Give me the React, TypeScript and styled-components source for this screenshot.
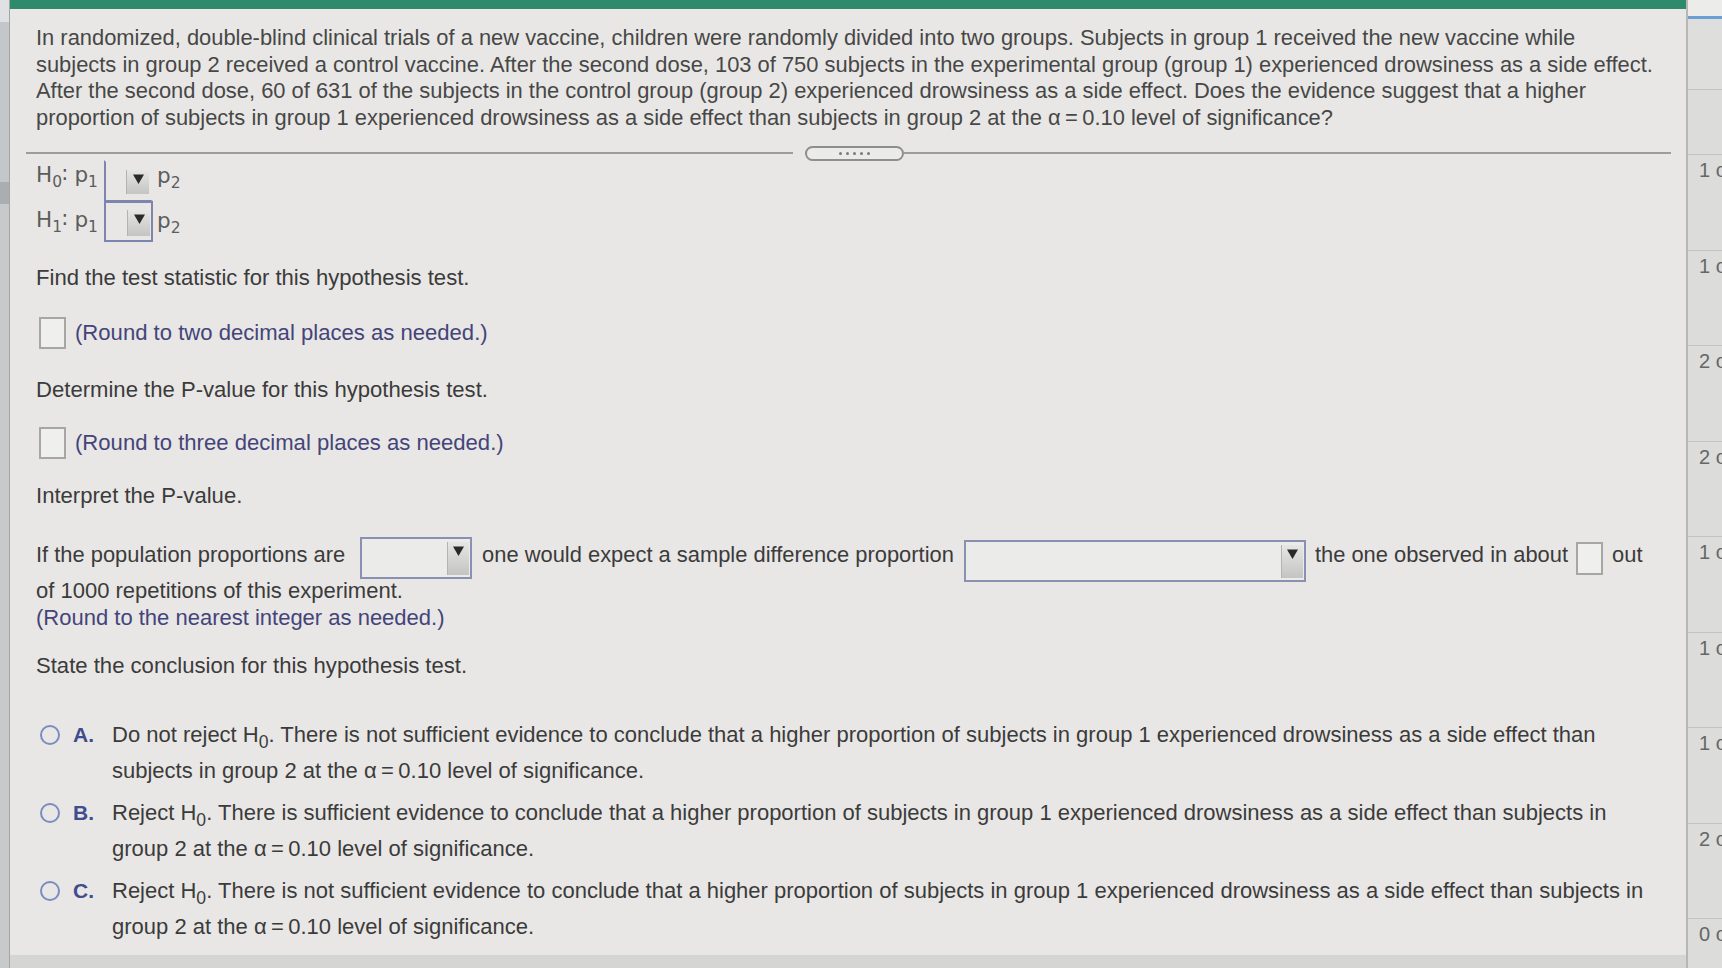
import React from "react";
import styled, { createGlobalStyle } from "styled-components";

const GlobalStyle = createGlobalStyle`
  html, body { margin: 0; padding: 0; }
  body {
    background: #dcdcda;
    font-family: "Liberation Sans", Arial, sans-serif;
  }
  #root { width: 1722px; height: 968px; overflow: hidden; }
`;

const Page = styled.div`
  display: flex;
  width: 1722px;
  height: 968px;
  overflow: hidden;
`;

const LeftRail = styled.div`
  flex: none;
  width: 9px;
  border-right: 1px solid #a3a5a7;
  background: linear-gradient(
    #dfe1e3 0, #dfe1e3 22px,
    #c4c7ca 22px, #c4c7ca 182px,
    #abaeb1 182px, #abaeb1 204px,
    #c7c9cb 204px
  );
`;

const Main = styled.div`
  flex: 1;
  display: flex;
  flex-direction: column;
  background: #e8e7e5;
  border-right: 2px solid #b7b7b5;
  min-width: 0;
`;

const TopBar = styled.div`
  flex: none;
  height: 9px;
  background: #2e8a6c;
`;

const Content = styled.div`
  flex: 1;
  padding: 16px 0 0 26px;
  color: #3b3b3b;
`;

const Intro = styled.p`
  margin: 0;
  font-size: 21.9px;
  line-height: 26.5px;
  color: #474747;
  white-space: nowrap;
`;

const Divider = styled.div`
  display: flex;
  align-items: center;
  height: 14px;
  margin: 15px 15px 0 -10px;
`;

const DividerLine = styled.div`
  flex: 1;
  height: 2px;
  background: #9c9c9a;
`;

const Handle = styled.div`
  flex: none;
  width: 99px;
  height: 15px;
  box-sizing: border-box;
  border: 2px solid #8e8e8c;
  border-radius: 8px;
  background: #ebebea;
  display: flex;
  align-items: center;
  justify-content: center;
  gap: 4px;
  margin-left: 12px;
`;

const Dot = styled.span`
  width: 3px;
  height: 3px;
  border-radius: 50%;
  background: #7a7a7a;
`;

const HypRow = styled.div`
  display: flex;
  align-items: flex-start;
  height: 41px;
`;

const HypLabel = styled.span<{ $dy: number }>`
  width: 68px;
  margin-top: ${(p) => p.$dy}px;
  font-family: "DejaVu Sans", "Liberation Sans", sans-serif;
  font-size: 21.5px;
  line-height: 26px;
  color: #5c5c5c;
  white-space: nowrap;
`;

const Sub = styled.sub`
  font-size: 0.72em;
  line-height: 0;
  vertical-align: -0.3em;
`;

const HypSelect = styled.div<{ $first?: boolean }>`
  width: 49px;
  height: 41px;
  box-sizing: border-box;
  border: 2px solid #7d84ad;
  border-top-color: ${(p) => (p.$first ? "transparent" : "#7d84ad")};
  border-right-color: ${(p) => (p.$first ? "transparent" : "#7d84ad")};
  border-bottom-width: ${(p) => (p.$first ? "1px" : "2px")};
  display: flex;
  justify-content: flex-end;
  align-items: flex-start;
  padding: ${(p) => (p.$first ? "8px 2px 0 0" : "7px 1px 0 0")};
`;

const ArrowBtn = styled.span<{ $w: number; $h: number }>`
  width: ${(p) => p.$w}px;
  height: ${(p) => p.$h}px;
  box-sizing: border-box;
  background: linear-gradient(#e6e6e4, #c4c4c2);
  border-left: 1px solid #b3b3b1;
  display: flex;
  justify-content: center;
  align-items: flex-start;
  padding-top: 4px;
`;

const HypAfter = styled.span<{ $dy: number }>`
  margin: ${(p) => p.$dy}px 0 0 4px;
  font-family: "DejaVu Sans", "Liberation Sans", sans-serif;
  font-size: 21.5px;
  line-height: 26px;
  color: #5c5c5c;
`;

const Prompt = styled.div<{ $mt: number }>`
  margin-top: ${(p) => p.$mt}px;
  font-size: 22.1px;
  line-height: 26px;
  white-space: nowrap;
`;

const AnswerRow = styled.div<{ $mt: number }>`
  display: flex;
  align-items: center;
  height: 34px;
  margin-top: ${(p) => p.$mt}px;
  padding-left: 3px;
  gap: 9px;
`;

const InputBox = styled.span<{ $mt?: number; $ml?: number; $h?: number }>`
  flex: none;
  width: 27px;
  height: ${(p) => p.$h ?? 32}px;
  box-sizing: border-box;
  border: 2px solid #a6a6a4;
  background: #efefee;
  margin-top: ${(p) => p.$mt ?? 0}px;
  margin-left: ${(p) => p.$ml ?? 0}px;
`;

const Hint = styled.span`
  font-size: 22.1px;
  line-height: 26px;
  color: #44447a;
  white-space: nowrap;
`;

const InterpretRow = styled.div`
  display: flex;
  align-items: flex-start;
  height: 40px;
  margin-top: 28px;
  white-space: nowrap;
`;

const RowText = styled.span<{ $ml?: number }>`
  margin-top: 5px;
  margin-left: ${(p) => p.$ml ?? 0}px;
  font-size: 21.9px;
  line-height: 26px;
`;

const Select = styled.span<{ $w: number; $mt: number; $ml: number }>`
  flex: none;
  width: ${(p) => p.$w}px;
  height: 42px;
  box-sizing: border-box;
  margin-top: ${(p) => p.$mt}px;
  margin-left: ${(p) => p.$ml}px;
  border: 2px solid #8a90b0;
  background: #ebebea;
  display: flex;
  justify-content: flex-end;
  align-items: flex-start;
  padding: 3px 1px 0 0;
`;

const LineText = styled.div<{ $hint?: boolean }>`
  font-size: 22px;
  line-height: 27px;
  color: ${(p) => (p.$hint ? "#44447a" : "#3b3b3b")};
  white-space: nowrap;
`;

const Options = styled.div`
  margin-top: 38px;
  display: flex;
  flex-direction: column;
  gap: 6px;
`;

const Option = styled.div`
  display: flex;
  align-items: flex-start;
`;

const Radio = styled.span`
  flex: none;
  width: 20px;
  height: 20px;
  box-sizing: border-box;
  border: 2px solid #7a8cc0;
  border-radius: 50%;
  margin: 8px 13px 0 4px;
`;

const Letter = styled.span`
  flex: none;
  width: 39px;
  font-size: 21px;
  line-height: 36px;
  font-weight: bold;
  color: #3f4c8e;
`;

const OptionText = styled.div`
  font-size: 22px;
  line-height: 36px;
  white-space: nowrap;
`;

const OptSub = styled.sub`
  font-size: 0.8em;
  line-height: 0;
  vertical-align: -0.35em;
`;

const Footer = styled.div`
  flex: none;
  height: 13px;
  background: #d5d5d3;
`;

const RightRail = styled.div`
  flex: none;
  width: 34px;
  display: flex;
  flex-direction: column;
  background: #dcdcda;
  overflow: hidden;
`;

const RailBand = styled.div<{ $h: number; $bg: string; $line?: boolean }>`
  flex: none;
  height: ${(p) => p.$h}px;
  background: ${(p) => p.$bg};
  box-sizing: border-box;
  border-bottom: ${(p) => (p.$line ? "1px solid #c3c3c1" : "none")};
`;

const RailRow = styled.div`
  flex: none;
  height: 95.5px;
  box-sizing: border-box;
  border-bottom: 1px solid #c3c3c1;
  padding: 3px 0 0 11px;
  font-size: 20px;
  line-height: 24px;
  color: #666;
  white-space: nowrap;
`;

const Tri = () => (
  <svg width="11" height="10" viewBox="0 0 11 10">
    <path d="M0 0.5 L11 0.5 L5.5 10 Z" fill="#2a2a2a" />
  </svg>
);

const alpha = "\u03b1\u2009=\u20090.10";

export default function App() {
  const rail = [1, 1, 2, 2, 1, 1, 1, 2, 0];
  return (
    <>
      <GlobalStyle />
      <Page>
        <LeftRail />
        <Main>
          <TopBar />
          <Content>
            <Intro>
              In randomized, double-blind clinical trials of a new vaccine, children were randomly divided into two groups. Subjects in group 1 received the new vaccine while
              <br />
              subjects in group 2 received a control vaccine. After the second dose, 103 of 750 subjects in the experimental group (group 1) experienced drowsiness as a side effect.
              <br />
              After the second dose, 60 of 631 of the subjects in the control group (group 2) experienced drowsiness as a side effect. Does the evidence suggest that a higher
              <br />
              proportion of subjects in group 1 experienced drowsiness as a side effect than subjects in group 2 at the {alpha} level of significance?
            </Intro>

            <Divider>
              <DividerLine />
              <Handle>
                <Dot />
                <Dot />
                <Dot />
                <Dot />
                <Dot />
              </Handle>
              <DividerLine />
            </Divider>

            <HypRow>
              <HypLabel $dy={2}>
                H<Sub>0</Sub>∶ p<Sub>1</Sub>
              </HypLabel>
              <HypSelect $first>
                <ArrowBtn $w={23} $h={24}>
                  <Tri />
                </ArrowBtn>
              </HypSelect>
              <HypAfter $dy={3}>
                p<Sub>2</Sub>
              </HypAfter>
            </HypRow>
            <HypRow>
              <HypLabel $dy={6}>
                H<Sub>1</Sub>∶ p<Sub>1</Sub>
              </HypLabel>
              <HypSelect>
                <ArrowBtn $w={23} $h={26}>
                  <Tri />
                </ArrowBtn>
              </HypSelect>
              <HypAfter $dy={7}>
                p<Sub>2</Sub>
              </HypAfter>
            </HypRow>

            <Prompt $mt={23}>Find the test statistic for this hypothesis test.</Prompt>
            <AnswerRow $mt={25}>
              <InputBox />
              <Hint>(Round to two decimal places as needed.)</Hint>
            </AnswerRow>

            <Prompt $mt={27}>Determine the P-value for this hypothesis test.</Prompt>
            <AnswerRow $mt={23}>
              <InputBox />
              <Hint>(Round to three decimal places as needed.)</Hint>
            </AnswerRow>

            <Prompt $mt={23}>Interpret the P-value.</Prompt>
            <InterpretRow>
              <RowText>If the population proportions are</RowText>
              <Select $w={112} $mt={0} $ml={15}>
                <ArrowBtn $w={22} $h={33}>
                  <Tri />
                </ArrowBtn>
              </Select>
              <RowText $ml={10}>one would expect a sample difference proportion</RowText>
              <Select $w={342} $mt={3} $ml={10}>
                <ArrowBtn $w={22} $h={33}>
                  <Tri />
                </ArrowBtn>
              </Select>
              <RowText $ml={9}>the one observed in about</RowText>
              <InputBox $mt={5} $ml={8} $h={33} />
              <RowText $ml={9}>out</RowText>
            </InterpretRow>
            <LineText>of 1000 repetitions of this experiment.</LineText>
            <LineText $hint>(Round to the nearest integer as needed.)</LineText>

            <Prompt $mt={22}>State the conclusion for this hypothesis test.</Prompt>

            <Options>
              <Option>
                <Radio />
                <Letter>A.</Letter>
                <OptionText>
                  Do not reject H<OptSub>0</OptSub>. There is not sufficient evidence to conclude that a higher proportion of subjects in group 1 experienced drowsiness as a side effect than
                  <br />
                  subjects in group 2 at the {alpha} level of significance.
                </OptionText>
              </Option>
              <Option>
                <Radio />
                <Letter>B.</Letter>
                <OptionText>
                  Reject H<OptSub>0</OptSub>. There is sufficient evidence to conclude that a higher proportion of subjects in group 1 experienced drowsiness as a side effect than subjects in
                  <br />
                  group 2 at the {alpha} level of significance.
                </OptionText>
              </Option>
              <Option>
                <Radio />
                <Letter>C.</Letter>
                <OptionText>
                  Reject H<OptSub>0</OptSub>. There is not sufficient evidence to conclude that a higher proportion of subjects in group 1 experienced drowsiness as a side effect than subjects in
                  <br />
                  group 2 at the {alpha} level of significance.
                </OptionText>
              </Option>
            </Options>
          </Content>
          <Footer />
        </Main>
        <RightRail>
          <RailBand $h={16} $bg="#ececeb" />
          <RailBand $h={3} $bg="#6b9fd6" />
          <RailBand $h={71} $bg="#dededc" $line />
          <RailBand $h={65} $bg="#dcdcda" $line />
          {rail.map((n, i) => (
            <RailRow key={i}>{n} of 1</RailRow>
          ))}
        </RightRail>
      </Page>
    </>
  );
}
